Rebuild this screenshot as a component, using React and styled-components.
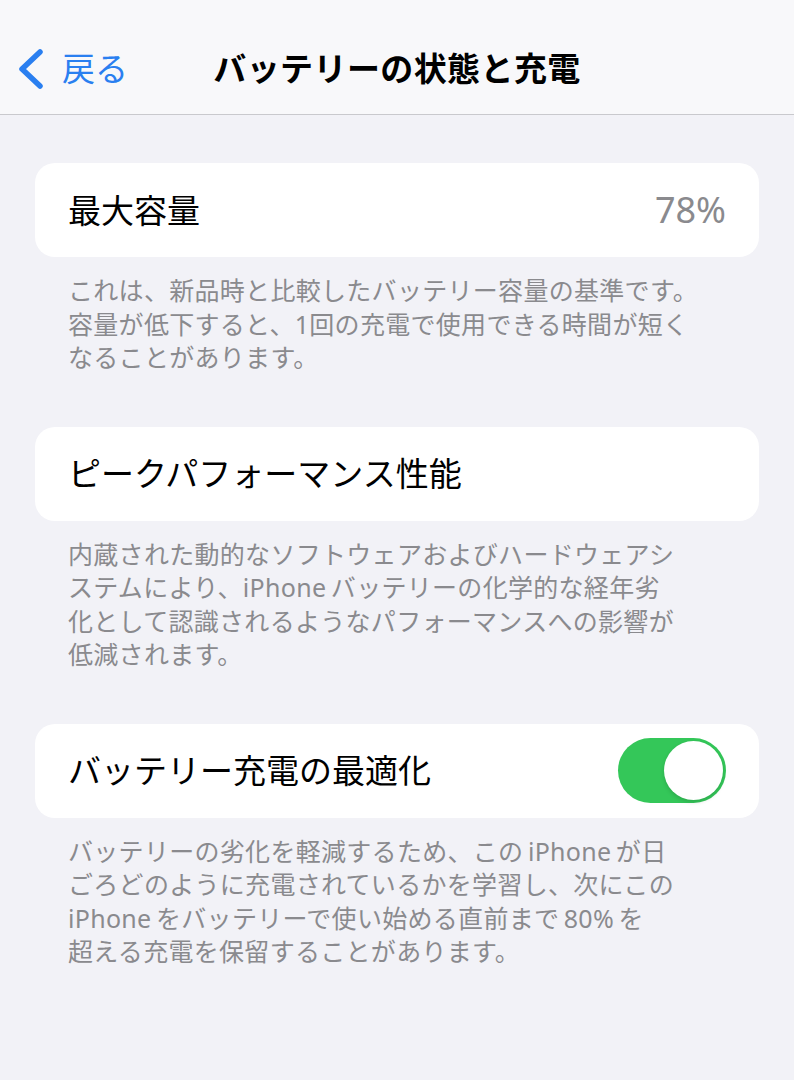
import React from 'react';
import styled, { createGlobalStyle } from 'styled-components';

const GlobalStyle = createGlobalStyle`
  html, body {
    margin: 0;
    padding: 0;
    background: #f2f2f7;
  }
  body {
    font-family: "Noto Sans", "Noto Sans CJK JP", sans-serif;
    -webkit-font-smoothing: antialiased;
  }
`;

// iOS puts a little air between Latin words and kana
const sp = '\u2006';

const sections = [
  {
    label: '最大容量',
    value: '78%',
    footer: [
      'これは、新品時と比較したバッテリー容量の基準です。',
      '容量が低下すると、1回の充電で使用できる時間が短く',
      'なることがあります。',
    ],
  },
  {
    label: 'ピークパフォーマンス性能',
    footer: [
      '内蔵された動的なソフトウェアおよびハードウェアシ',
      `ステムにより、iPhone${sp}バッテリーの化学的な経年劣`,
      '化として認識されるようなパフォーマンスへの影響が',
      '低減されます。',
    ],
  },
  {
    label: 'バッテリー充電の最適化',
    toggle: true,
    footer: [
      `バッテリーの劣化を軽減するため、この${sp}iPhone${sp}が日`,
      'ごろどのように充電されているかを学習し、次にこの',
      `iPhone${sp}をバッテリーで使い始める直前まで${sp}80%${sp}を`,
      '超える充電を保留することがあります。',
    ],
  },
];

function Chevron() {
  return (
    <svg width="30" height="42" viewBox="0 0 30 42">
      <path
        d="M24 4 L6 21 L24 38"
        fill="none"
        stroke="#2a7ff0"
        strokeWidth="5.5"
        strokeLinecap="round"
        strokeLinejoin="round"
      />
    </svg>
  );
}

export default function App() {
  return (
    <Page>
      <GlobalStyle />
      <NavBar>
        <BackButton>
          <Chevron />
          <BackLabel>戻る</BackLabel>
        </BackButton>
        <Title>バッテリーの状態と充電</Title>
        <span />
      </NavBar>

      <Content>
        {sections.map(s => (
          <Section key={s.label}>
            <Card>
              <Label>{s.label}</Label>
              {s.value && <Value>{s.value}</Value>}
              {s.toggle && (
                <Toggle>
                  <Knob />
                </Toggle>
              )}
            </Card>
            <Footer>
              {s.footer.map(line => (
                <FooterLine key={line}>{line}</FooterLine>
              ))}
            </Footer>
          </Section>
        ))}
      </Content>
    </Page>
  );
}

const Page = styled.div`
  width: 794px;
  min-height: 1080px;
  background: #f2f2f7;
`;

const NavBar = styled.header`
  box-sizing: border-box;
  height: 115px;
  padding-top: 23px;
  background: #f8f8fa;
  border-bottom: 1px solid #c9c9cd;
  display: grid;
  grid-template-columns: 1fr auto 1fr;
  align-items: center;
`;

const BackButton = styled.div`
  display: flex;
  align-items: center;
  padding-left: 16px;
  gap: 16px;
`;

const BackLabel = styled.span`
  font-size: 33px;
  color: #2a7ff0;
  line-height: 1;
`;

const Title = styled.h1`
  margin: 0;
  font-size: 33px;
  font-weight: 700;
  color: #000;
  line-height: 1;
  letter-spacing: 0.4px;
`;

const Content = styled.main`
  padding: 48px 35px 0;
  display: flex;
  flex-direction: column;
  gap: 52px;
`;

const Section = styled.section`
  display: flex;
  flex-direction: column;
`;

const Card = styled.div`
  box-sizing: border-box;
  height: 94px;
  padding: 0 33px;
  background: #fff;
  border-radius: 20px;
  display: flex;
  align-items: center;
  justify-content: space-between;
`;

const Label = styled.span`
  font-size: 33px;
  color: #000;
  line-height: 1;
`;

const Value = styled.span`
  font-family: "Noto Sans", sans-serif;
  font-size: 36px;
  color: #8a8a8e;
  line-height: 1;
`;

const Toggle = styled.div`
  box-sizing: border-box;
  width: 108px;
  height: 65px;
  padding: 3px;
  border-radius: 33px;
  background: #34c759;
  display: flex;
  justify-content: flex-end;
`;

const Knob = styled.div`
  width: 59px;
  height: 59px;
  border-radius: 50%;
  background: #fff;
  box-shadow: 0 2px 4px rgba(0, 0, 0, 0.15);
`;

const Footer = styled.div`
  padding: 17px 33px 0;
  display: flex;
  flex-direction: column;
`;

const FooterLine = styled.div`
  font-size: 25px;
  line-height: 33.5px;
  letter-spacing: 0.3px;
  color: #8a8a8e;
  white-space: nowrap;
`;
